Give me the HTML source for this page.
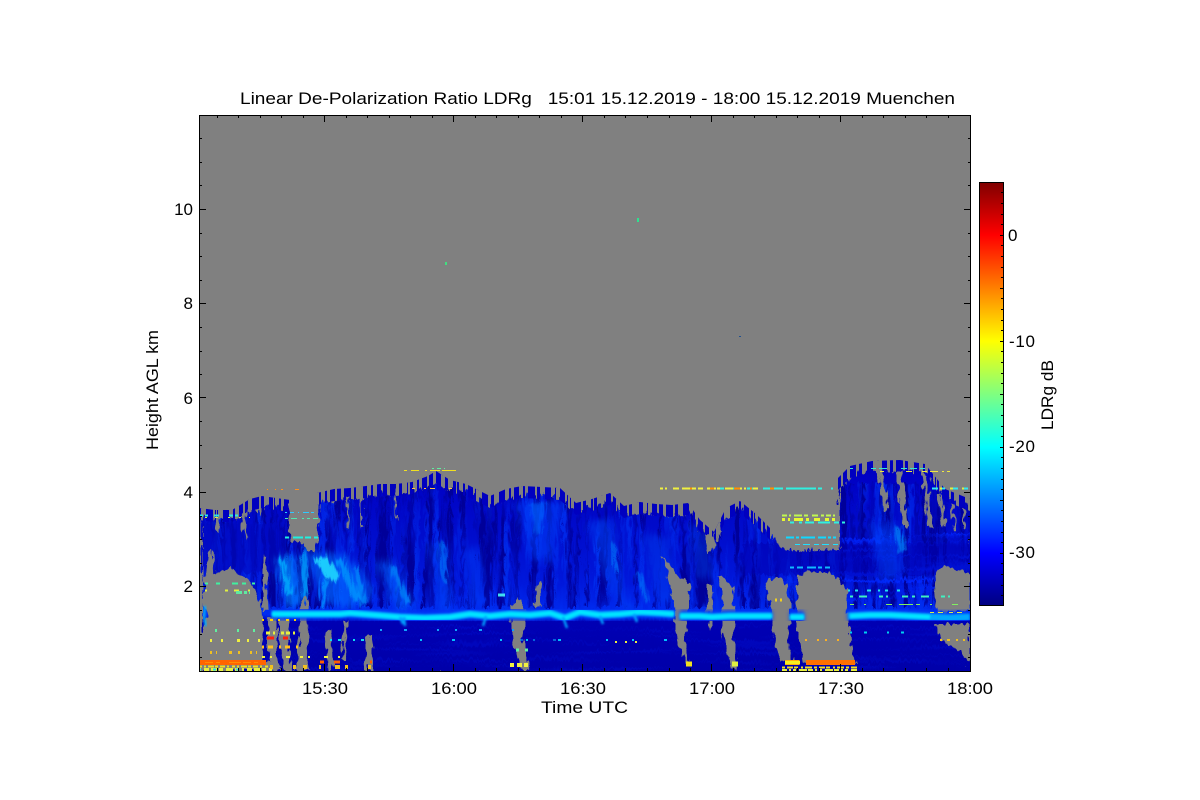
<!DOCTYPE html>
<html><head><meta charset="utf-8"><title>LDRg</title>
<style>html,body{margin:0;padding:0;background:#fff}svg{display:block}text{font-family:"Liberation Sans",sans-serif;font-size:17px;fill:#000}</style>
</head><body>
<svg xmlns="http://www.w3.org/2000/svg" width="1200" height="800" viewBox="0 0 1200 800">
<defs>
<linearGradient id="jet" x1="0" y1="1" x2="0" y2="0">
<stop offset="0" stop-color="#00007f"/><stop offset=".125" stop-color="#0000ff"/><stop offset=".375" stop-color="#00ffff"/><stop offset=".625" stop-color="#ffff00"/><stop offset=".875" stop-color="#ff0000"/><stop offset="1" stop-color="#7f0000"/>
</linearGradient>
<linearGradient id="cloud" gradientUnits="userSpaceOnUse" x1="0" y1="470" x2="0" y2="671">
<stop offset="0" stop-color="#0000c4"/><stop offset=".3" stop-color="#000ccc"/><stop offset=".55" stop-color="#0018dc"/><stop offset=".7" stop-color="#002cf0"/><stop offset=".735" stop-color="#0000b4"/><stop offset="1" stop-color="#0000a8"/>
</linearGradient>
<clipPath id="plot"><rect x="200" y="116" width="770" height="555"/></clipPath>
<clipPath id="cl"><polygon points="199,671 199,514 215,516 222,512 232,516 244,510 250,505 256,512 262,502 270,500 276,504 284,501 290,506 298,540 312,540 317,499 324,497 328,501 334,495 342,497 350,494 358,496 366,492 374,493 380,490 388,492 396,490 404,489 412,488 420,487 428,482 436,477 442,487 450,486 458,487 466,490 474,492 482,498 490,502 498,498 506,495 514,492 522,492 532,491 542,493 552,493 560,494 568,504 576,509 584,503 592,505 600,501 610,499 618,505 624,512 632,510 640,508 648,512 656,510 664,513 672,511 680,512 688,509 694,517 700,526 706,540 714,538 720,517 726,514 732,508 740,507 748,515 756,520 762,528 770,534 778,545 790,548 835,546 836,500 838,484 850,472 860,470 872,467 890,469 900,466 915,467 925,470 935,488 945,495 960,500 970,505 970,671"/></clipPath>
<clipPath id="topband">
<polygon points="199,508 215,510 232,510 250,499 262,496 276,498 290,500 290,512 276,510 262,508 250,511 232,522 215,522 199,520"/>
<polygon points="317,493 334,489 350,488 366,486 380,484 396,484 412,482 428,476 436,471 450,480 466,484 482,492 490,496 506,489 522,486 542,487 560,488 576,503 592,499 610,493 624,506 640,502 656,504 672,505 688,503 700,520 714,532 726,508 740,501 756,514 770,528 770,540 756,526 740,513 726,520 714,544 700,532 688,515 672,517 656,516 640,514 624,518 610,505 592,511 576,515 560,500 542,499 522,498 506,501 490,508 482,504 466,496 450,492 436,483 428,488 412,494 396,496 380,496 366,498 350,500 334,501 317,505"/>
<polygon points="838,478 850,466 872,461 900,460 925,464 945,489 970,499 970,511 945,501 925,476 900,472 872,473 850,478 838,490"/>
</clipPath>
<filter id="b1" x="-30%" y="-30%" width="160%" height="160%"><feGaussianBlur stdDeviation="1"/></filter>
<filter id="b2" x="-50%" y="-50%" width="200%" height="200%"><feGaussianBlur stdDeviation="2"/></filter>
<filter id="b4" x="-50%" y="-50%" width="200%" height="200%"><feGaussianBlur stdDeviation="4"/></filter>
<filter id="rough" filterUnits="userSpaceOnUse" x="190" y="440" width="790" height="240" color-interpolation-filters="sRGB"><feTurbulence type="turbulence" baseFrequency="0.28 0.06" numOctaves="1" seed="3" result="n"/><feDisplacementMap in="SourceGraphic" in2="n" scale="9" xChannelSelector="R" yChannelSelector="G"/></filter>
<filter id="rough2" filterUnits="userSpaceOnUse" x="190" y="440" width="790" height="240" color-interpolation-filters="sRGB"><feTurbulence type="fractalNoise" baseFrequency="0.3 0.12" numOctaves="1" seed="9" result="n"/><feDisplacementMap in="SourceGraphic" in2="n" scale="10" xChannelSelector="R" yChannelSelector="G"/></filter>
<filter id="dark" x="0" y="0" width="100%" height="100%" color-interpolation-filters="sRGB"><feTurbulence type="fractalNoise" baseFrequency="0.16 0.008" numOctaves="2" seed="4"/><feColorMatrix values="0 0 0 0 0 0 0 0 0 0 0 0 0 0 .6 5 0 0 0 -2.3"/></filter>
<filter id="light" x="0" y="0" width="100%" height="100%" color-interpolation-filters="sRGB"><feTurbulence type="fractalNoise" baseFrequency="0.12 0.007" numOctaves="2" seed="11"/><feColorMatrix values="0 0 0 0 0 0 0 0 0 .2 0 0 0 0 .95 0 5 0 0 -2.55"/></filter>
<filter id="hlayer" x="0" y="0" width="100%" height="100%" color-interpolation-filters="sRGB"><feTurbulence type="fractalNoise" baseFrequency="0.01 0.25" numOctaves="2" seed="7"/><feColorMatrix values="0 0 0 0 0 0 0 0 0 .15 0 0 0 0 1 5 0 0 0 -2.6"/></filter>
</defs>

<g clip-path="url(#plot)">
<rect x="199" y="115" width="772" height="557" fill="#808080"/>
<g shape-rendering="crispEdges">
<rect x="445" y="262" width="2" height="3" fill="#40e080"/><rect x="637" y="218" width="2" height="4" fill="#30e090"/><rect x="739" y="336" width="2" height="1" fill="#205090"/>
</g>

<!-- cloud body -->
<g filter="url(#rough)">
<g clip-path="url(#cl)">
<rect x="199" y="460" width="772" height="212" fill="url(#cloud)"/>
<rect x="199" y="480" width="772" height="130" filter="url(#light)" opacity=".7"/>
<rect x="199" y="480" width="772" height="125" filter="url(#dark)"/>
<rect x="840" y="530" width="130" height="70" filter="url(#hlayer)" opacity=".8"/>
<rect x="780" y="548" width="190" height="40" filter="url(#hlayer)" opacity=".6"/>
<rect x="199" y="622" width="772" height="49" filter="url(#hlayer)" opacity=".18"/>
<rect x="740" y="540" width="230" height="32" fill="#0000b0" opacity=".55"/>
<rect x="199" y="520" width="80" height="50" fill="#0008c0" opacity=".6"/>
<g filter="url(#b4)">
<polygon points="272,556 292,552 300,600 284,606" fill="#0080ff" opacity=".75"/>
<polygon points="300,548 345,552 372,590 350,606 320,600" fill="#0064ff" opacity=".7"/>
<polygon points="372,558 392,560 410,606 396,610" fill="#0060ff" opacity=".65"/>
<polygon points="426,540 442,540 448,608 436,608" fill="#0050ff" opacity=".5"/>
<polygon points="462,545 476,545 482,604 470,604" fill="#0048ff" opacity=".45"/>
<polygon points="512,498 562,498 550,560 528,556" fill="#0048ff" opacity=".5"/>
<polygon points="584,520 610,516 622,600 640,606 620,608 600,570" fill="#0050ff" opacity=".45"/>
<polygon points="640,530 665,535 672,600 655,600" fill="#0040f0" opacity=".45"/>
<polygon points="686,520 700,525 712,575 695,575" fill="#0048f8" opacity=".4"/>
<polygon points="866,525 892,520 902,570 880,580" fill="#0048ff" opacity=".5"/>
</g>
<g filter="url(#b1)">
<polygon points="276,558 281,556 290,590 283,592" fill="#00b0ff" opacity=".8"/>
<polygon points="297,560 302,540 306,590 300,600" fill="#00a8ff" opacity=".8"/>
<polygon points="312,558 324,552 336,572 330,580" fill="#20d8ff" opacity=".9"/>
<polygon points="332,556 340,556 358,595 350,598" fill="#00a0ff" opacity=".7"/>
<polygon points="350,565 355,566 364,600 358,604" fill="#00a0ff" opacity=".6"/>
<polygon points="320,575 325,575 322,610 318,610" fill="#00a8ff" opacity=".65"/>
<polygon points="386,562 392,562 408,600 402,602" fill="#00a0ff" opacity=".55"/>
<polygon points="436,540 442,540 444,580 440,580" fill="#0090ff" opacity=".5"/>
<polygon points="526,500 544,498 538,530 532,530" fill="#0070ff" opacity=".45"/>
<polygon points="608,540 612,540 616,570 612,570" fill="#0090ff" opacity=".5"/>
<polygon points="632,570 638,572 646,596 642,600" fill="#0090ff" opacity=".5"/>
<polygon points="890,525 898,525 903,545 896,550" fill="#00a0ff" opacity=".6"/>
</g>
</g>
</g>
<!-- vertical crenellations along the cloud top -->
<g clip-path="url(#topband)" shape-rendering="crispEdges" fill="none">
<path d="M199 510H971" stroke="#0000c0" stroke-width="100" stroke-dasharray="4 3 7 2 3 5 6 4 2 3 5 2"/>
<path d="M201 510H971" stroke="#808080" stroke-width="100" stroke-dasharray="2 13 1 19 3 9 2 23 1 7"/>
</g>

<!-- gray regions, bottom -->
<g fill="#808080" filter="url(#rough2)">
<polygon points="205,578 209,565 214,575 222,571 232,567 238,575 245,578 252,582 256,592 262,608 263,625 262,660 275,665 282,671 199,671 199,652 204,628 207,618 203,600"/>
<polygon points="209,552 212,548 214,578 207,578"/>
<polygon points="268,618 277,616 277,655 281,668 272,668 268,650"/>
<polygon points="279,616 288,616 290,665 296,671 284,671 279,640"/>
<polygon points="300,600 307,598 308,640 307,671 296,671 300,630"/>
<polygon points="325,632 331,630 333,671 328,671"/>
<polygon points="344,622 347,622 346,660 342,660"/>
<polygon points="365,636 371,636 373,671 366,671"/>
<polygon points="510,610 518,598 526,612 522,640 530,671 522,671 512,640"/>
<polygon points="537,584 540,582 541,607 535,608"/>
<polygon points="662,556 668,562 676,574 690,583 689,600 687,625 684,640 690,662 685,662 675,630 675,610 670,586"/>
<polygon points="707,585 712,585 713,620 710,632 707,610"/>
<polygon points="717,577 724,578 732,588 735,610 733,640 737,670 732,668 722,630 722,592"/>
<polygon points="765,584 773,578 784,578 790,600 790,625 787,640 793,662 781,662 772,630 770,605"/>
<polygon points="797,577 810,572 828,572 840,580 847,590 848,620 852,645 856,663 803,663 797,630 797,600"/>
<polygon points="934,575 945,566 970,574 970,612 936,612"/>
<polygon points="935,624 970,624 970,662 958,650 942,640"/>
<polygon points="263,560 266,556 268,610 263,610"/>
<polygon points="242,596 250,596 252,612 244,612"/>
<polygon points="288,505 318,505 318,540 290,542"/>
<polygon points="305,540 318,540 314,552 308,552"/>
<polygon points="346,495 348,495 349,530 347,530"/><polygon points="360,495 362,495 362,528 361,528"/>
<polygon points="394,490 396,490 396,520 395,520"/>
<polygon points="877,468 882,468 888,510 884,510"/><polygon points="896,472 902,472 908,526 903,526"/>
<polygon points="922,472 928,478 932,526 928,526"/><polygon points="938,495 941,496 946,528 943,528"/>
<polygon points="950,500 953,504 957,530 954,530"/><polygon points="962,508 964,508 966,530 964,530"/>
<polygon points="786,505 840,505 840,548 782,546 770,530"/>
<polygon points="704,536 716,534 712,552 708,552"/>
<polygon points="214,518 220,518 219,532 216,528"/><polygon points="240,514 247,510 246,540 243,530"/>
</g>

<!-- cyan backscatter band -->
<g fill="none" stroke-linecap="butt" stroke-linejoin="round">
<path d="M272 614 L300 614 L320 614 L350 613 L375 615 L400 617 L425 618 L450 617 L470 614 L490 616 L510 614 L530 615 L550 613 L565 618 L580 612 L600 615 L620 614 L640 612 L660 613 L674 614 M680 616 L700 616 L712 617 L730 616 L750 616 L772 616 M790 617 L804 617 M848 616 L870 615 L890 615 L910 616 L930 617 L950 618 L970 617" stroke="#0038f8" stroke-width="12" filter="url(#b2)"/>
<path d="M272 614 L340 614 L350 613 L375 615 L400 617 L425 618 L450 617 L470 614 L490 616 L510 614 L530 615 L550 613 L565 618 L580 612 L600 615 L620 614 L640 612 L660 613 L674 614 M680 616 L700 616 L712 617 L730 616 L750 616 L772 616 M790 617 L804 617 M848 616 L870 615 L890 615 L910 616 L930 617 L950 618 L970 617" stroke="#00a8ff" stroke-width="7" filter="url(#b1)"/>
<path d="M272 614 L340 614 L350 613 L375 615 L400 617 L425 618 L450 617 L470 614 L490 616 L510 614 L530 615 L550 613 L565 618 L580 612 L600 615 L620 614 L640 612 L660 613 L674 614 M680 616 L700 616 L712 617 L730 616 L750 616 L772 616 M790 617 L804 617 M850 616 L870 615 L890 615 L910 616 L930 617" stroke="#00e8ff" stroke-width="4" filter="url(#b1)"/>
<path d="M400 617L403 624M404 617L405 626M486 616L483 626M563 617L567 628M600 616L603 624M634 614L637 622" stroke="#00a0ff" stroke-width="2.5" filter="url(#b1)"/>
</g>
<path d="M205 606 L204 618 L206 626" stroke="#00b0ff" stroke-width="2.5" fill="none" filter="url(#b1)"/>

<!-- speckles -->
<g fill="none" shape-rendering="crispEdges" stroke-width="1">
<path d="M404 470.5 H460" stroke="#f0e020" stroke-dasharray="3 4 8 6 2 3 10 2 14 4"/>
<path d="M432 468.5 H445" stroke="#60f0a0" stroke-dasharray="2 3 4 3"/>
<path d="M267 489.5 H300" stroke="#ff9020" stroke-dasharray="1 7 1 5 2 12 4 4"/>
<path d="M412 488.5 H455" stroke="#ffc040" stroke-dasharray="3 9 2 4 5 14"/>
<path d="M660 488.5 H760" stroke="#f0f040" stroke-width="2" stroke-dasharray="3 2 2 6 6 3 14 2 5 4 9 1 5 3 12 2"/>
<path d="M720 488.5 H838" stroke="#30f0e0" stroke-width="2" stroke-dasharray="4 9 2 12 6 10 20 3 30 2"/>
<path d="M690 488.5 H790" stroke="#ff9000" stroke-width="2" stroke-dasharray="2 18 4 20 6 10"/>
<path d="M932 488.5 H970" stroke="#30e8f0" stroke-width="2" stroke-dasharray="6 3 4 5 8 4"/>
<path d="M940 488.5 H965" stroke="#e0f040" stroke-width="2" stroke-dasharray="2 8 3 9"/>
<path d="M850 468.5 H925" stroke="#30e8d0" stroke-dasharray="3 18 5 3 8 14 6 3 7"/>
<path d="M880 471.5 H950" stroke="#f0e840" stroke-dasharray="4 22 6 10 5 3 8 4 2 3"/>
<path d="M199 515.5 H240" stroke="#30e8e0" stroke-width="2" stroke-dasharray="4 2 3 6 5 10"/>
<path d="M205 517.5 H250" stroke="#e0f040" stroke-dasharray="2 8 3 10 2 9"/>
<path d="M285 512.5 H318" stroke="#30c8ff" stroke-dasharray="2 3 4 4 1 4 6"/>
<path d="M285 518.5 H318" stroke="#50e8b0" stroke-dasharray="3 3 6 5 2 3"/>
<path d="M285 537.5 H318" stroke="#20f0e0" stroke-width="2" stroke-dasharray="4 4 10 2 6 3"/>
<path d="M782 515.5 H836" stroke="#c0f850" stroke-width="2" stroke-dasharray="5 2 2 3 8 2 4 4 6 3 3 2"/>
<path d="M782 519.5 H836" stroke="#e8f830" stroke-width="3" stroke-dasharray="3 3 2 4 9 3 3 5 6 5 4"/>
<path d="M790 522.5 H845" stroke="#30f0e0" stroke-width="2" stroke-dasharray="4 5 3 3 9 4 12"/>
<path d="M786 537.5 H836" stroke="#10d8ff" stroke-width="2" stroke-dasharray="8 2 3 2 14 3"/>
<path d="M795 544.5 H840" stroke="#20e0ff" stroke-dasharray="5 3 7 4"/>
<path d="M790 567.5 H830" stroke="#10b8ff" stroke-width="2" stroke-dasharray="4 3 6 4 9 2"/>
<path d="M848 590.5 H900" stroke="#20e0f0" stroke-width="2" stroke-dasharray="2 5 3 9 4 7"/>
<path d="M850 596.5 H960" stroke="#40f0c0" stroke-width="2" stroke-dasharray="3 6 8 12 4 3 2 14 6 4"/>
<path d="M850 604.5 H965" stroke="#80f060" stroke-dasharray="4 10 2 20 6 7 14 3"/>
<path d="M930 612.5 H965" stroke="#e0f040" stroke-dasharray="4 4 5 6"/>
<path d="M850 632.5 H905" stroke="#00d0f0" stroke-width="2" stroke-dasharray="2 12 3 20"/>
<path d="M205 583.5 H258" stroke="#40f0a0" stroke-width="2" stroke-dasharray="3 8 4 12 6 4 4 6"/>
<path d="M205 590.5 H258" stroke="#e0f040" stroke-width="2" stroke-dasharray="2 18 3 6 5 9"/>
<path d="M236 592.5 H250" stroke="#60e8a0" stroke-width="3" stroke-dasharray="6 2 3 2"/>
<path d="M199 662.5 H266" stroke="#ff6400" stroke-width="5"/>
<path d="M205 662.5 H262" stroke="#ff8a00" stroke-width="1" stroke-dasharray="8 3 4 9 12 2"/>
<path d="M199 666.5 H272" stroke="#f0e020" stroke-width="2" stroke-dasharray="3 2 2 2 6 1 3 2 5 2 2 3"/>
<path d="M199 669.5 H272" stroke="#e8f040" stroke-width="3" stroke-dasharray="2 3 5 2 6 2 4 3 7 2 3 4"/>
<path d="M199 669.5 H240" stroke="#20e0f0" stroke-width="2" stroke-dasharray="2 12 3 20"/>
<path d="M785 662.5 H855" stroke="#ff7000" stroke-width="5" stroke-dasharray="14 7 50"/>
<path d="M785 662.5 H800" stroke="#f8f020" stroke-width="4"/>
<path d="M782 667.5 H857" stroke="#f0e020" stroke-width="2" stroke-dasharray="3 2 6 1 4 3 2 2 7 2"/>
<path d="M782 670 H857" stroke="#e8f040" stroke-width="2" stroke-dasharray="5 2 2 2 3 3 8 1"/>
<path d="M210 640.5 H262" stroke="#f0f040" stroke-width="3" stroke-dasharray="2 9 2 14 3 7"/>
<path d="M210 652.5 H262" stroke="#f0c020" stroke-width="3" stroke-dasharray="2 4 1 12 3 6 2 10"/>
<path d="M215 630.5 H262" stroke="#60f0a0" stroke-width="3" stroke-dasharray="2 20 2 14"/>
<path d="M262 620 H300" stroke="#ffd000" stroke-width="2" stroke-dasharray="2 6 3 5"/>
<path d="M266 633 H296" stroke="#e8f040" stroke-width="3" stroke-dasharray="4 3 2 6 3 2"/>
<path d="M267 638 H298" stroke="#ff2010" stroke-width="3" stroke-dasharray="7 9 5 30"/>
<path d="M262 647 H300" stroke="#ffc020" stroke-width="3" stroke-dasharray="2 4 5 6"/>
<path d="M262 657 H340" stroke="#f0f040" stroke-width="2" stroke-dasharray="3 5 2 14 4 10"/>
<path d="M270 667 H375" stroke="#f0c020" stroke-width="4" stroke-dasharray="3 20 3 7 4 12 2 14 5 5"/>
<path d="M320 662 H372" stroke="#ff6000" stroke-width="3" stroke-dasharray="4 10 6 30"/>
<path d="M330 640 H370" stroke="#10e0f0" stroke-width="2" stroke-dasharray="2 6 3 12"/>
<path d="M380 630 H520" stroke="#10a0ff" stroke-width="2" stroke-dasharray="2 22 3 30 2 16"/>
<path d="M420 640 H700" stroke="#00c0ff" stroke-width="2" stroke-dasharray="2 30 3 45 2 24"/>
<path d="M500 640 H560" stroke="#10c0ff" stroke-dasharray="2 18 3 10"/>
<path d="M510 665 H530" stroke="#f0f040" stroke-width="4" stroke-dasharray="4 3 5 2"/>
<path d="M516 650 H530" stroke="#60f0a0" stroke-width="3" stroke-dasharray="3 6"/>
<path d="M686 664 H692" stroke="#f0e020" stroke-width="5"/>
<path d="M732 664 H738" stroke="#e0f040" stroke-width="5"/>
<path d="M615 642 H640" stroke="#f0f040" stroke-width="2" stroke-dasharray="2 8"/>
<path d="M498 595 H505" stroke="#40e0f0" stroke-width="3"/>
<path d="M805 640 H845" stroke="#ffb020" stroke-width="2" stroke-dasharray="2 10 2 6"/>
<path d="M940 640 H965" stroke="#f0c020" stroke-width="2" stroke-dasharray="2 5 3 6"/>
<path d="M775 600 H784" stroke="#f0d020" stroke-width="3" stroke-dasharray="2 3"/>
</g>
</g>

<!-- axes frame and ticks -->
<g fill="none" stroke="#000" stroke-width="1" shape-rendering="crispEdges">
<rect x="199.5" y="115.5" width="771" height="556" stroke-width="1.4"/>
<path d="M199 209.5h7M199 303.5h7M199 397.5h7M199 492.5h7M199 586.5h7M971 209.5h-7M971 303.5h-7M971 397.5h-7M971 492.5h-7M971 586.5h-7"/>
<path d="M199 138.5h3M199 162.5h3M199 185.5h3M199 233.5h3M199 256.5h3M199 280.5h3M199 327.5h3M199 351.5h3M199 374.5h3M199 421.5h3M199 445.5h3M199 468.5h3M199 516.5h3M199 539.5h3M199 563.5h3M199 610.5h3M199 634.5h3M199 657.5h3M971 138.5h-3M971 162.5h-3M971 185.5h-3M971 233.5h-3M971 256.5h-3M971 280.5h-3M971 327.5h-3M971 351.5h-3M971 374.5h-3M971 421.5h-3M971 445.5h-3M971 468.5h-3M971 516.5h-3M971 539.5h-3M971 563.5h-3M971 610.5h-3M971 634.5h-3M971 657.5h-3"/>
<path d="M324.5 671v-7M453.5 671v-7M582.5 671v-7M711.5 671v-7M840.5 671v-7M324.5 115v7M453.5 115v7M582.5 115v7M711.5 115v7M840.5 115v7"/>
<path d="M217.5 671v-3M238.5 671v-3M260.5 671v-3M281.5 671v-3M303.5 671v-3M346.5 671v-3M367.5 671v-3M389.5 671v-3M410.5 671v-3M432.5 671v-3M475.5 671v-3M496.5 671v-3M518.5 671v-3M539.5 671v-3M561.5 671v-3M604.5 671v-3M625.5 671v-3M647.5 671v-3M669.5 671v-3M690.5 671v-3M733.5 671v-3M754.5 671v-3M776.5 671v-3M797.5 671v-3M819.5 671v-3M862.5 671v-3M883.5 671v-3M905.5 671v-3M926.5 671v-3M948.5 671v-3"/>
<path d="M217.5 115v3M238.5 115v3M260.5 115v3M281.5 115v3M303.5 115v3M346.5 115v3M367.5 115v3M389.5 115v3M410.5 115v3M432.5 115v3M475.5 115v3M496.5 115v3M518.5 115v3M539.5 115v3M561.5 115v3M604.5 115v3M625.5 115v3M647.5 115v3M669.5 115v3M690.5 115v3M733.5 115v3M754.5 115v3M776.5 115v3M797.5 115v3M819.5 115v3M862.5 115v3M883.5 115v3M905.5 115v3M926.5 115v3M948.5 115v3"/>
</g>

<!-- colourbar -->
<rect x="979" y="182" width="24" height="424" fill="url(#jet)"/>
<g fill="none" stroke="#000" shape-rendering="crispEdges">
<rect x="979.5" y="182.5" width="24" height="423"/>
<path d="M1003 192.5h-2M1003 203.5h-2M1003 214.5h-2M1003 224.5h-2M1003 235.5h-3M1003 245.5h-2M1003 256.5h-2M1003 267.5h-2M1003 277.5h-2M1003 288.5h-3M1003 298.5h-2M1003 309.5h-2M1003 320.5h-2M1003 330.5h-2M1003 341.5h-3M1003 351.5h-2M1003 362.5h-2M1003 373.5h-2M1003 383.5h-2M1003 394.5h-3M1003 404.5h-2M1003 415.5h-2M1003 426.5h-2M1003 436.5h-2M1003 447.5h-3M1003 457.5h-2M1003 468.5h-2M1003 479.5h-2M1003 489.5h-2M1003 500.5h-3M1003 510.5h-2M1003 521.5h-2M1003 532.5h-2M1003 542.5h-2M1003 553.5h-3M1003 563.5h-2M1003 574.5h-2M1003 585.5h-2M1003 595.5h-2"/>
</g>

<!-- text -->
<text x="240" y="104" textLength="715" lengthAdjust="spacingAndGlyphs" xml:space="preserve">Linear De-Polarization Ratio LDRg   15:01 15.12.2019 - 18:00 15.12.2019 Muenchen</text>
<g text-anchor="end">
<text x="193" y="215">10</text><text x="193" y="309">8</text><text x="193" y="404">6</text><text x="193" y="498">4</text><text x="193" y="592">2</text>
</g>
<text x="302" y="694" textLength="46" lengthAdjust="spacingAndGlyphs">15:30</text>
<text x="431" y="694" textLength="46" lengthAdjust="spacingAndGlyphs">16:00</text>
<text x="560" y="694" textLength="46" lengthAdjust="spacingAndGlyphs">16:30</text>
<text x="689" y="694" textLength="46" lengthAdjust="spacingAndGlyphs">17:00</text>
<text x="818" y="694" textLength="46" lengthAdjust="spacingAndGlyphs">17:30</text>
<text x="947" y="694" textLength="46" lengthAdjust="spacingAndGlyphs">18:00</text>
<text x="541" y="713" textLength="87" lengthAdjust="spacingAndGlyphs">Time UTC</text>
<text transform="translate(158 450) rotate(-90)" textLength="120" lengthAdjust="spacingAndGlyphs">Height AGL km</text>
<text x="1008" y="241">0</text>
<text x="1009" y="347" textLength="26">-10</text>
<text x="1009" y="452" textLength="26">-20</text>
<text x="1009" y="558" textLength="26">-30</text>
<text transform="translate(1053 430) rotate(-90)" textLength="70" lengthAdjust="spacingAndGlyphs">LDRg dB</text>
</svg>
</body></html>
